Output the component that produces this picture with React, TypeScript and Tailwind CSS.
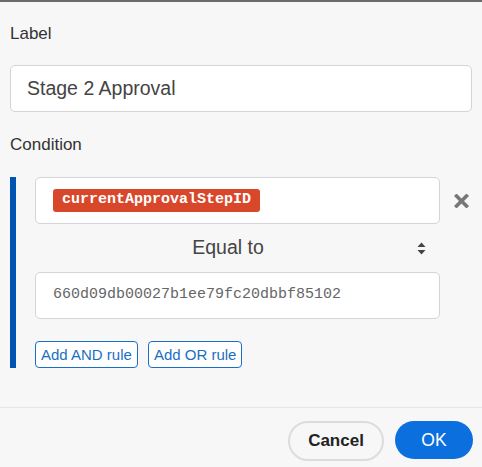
const sans = "font-[family-name:'Liberation_Sans',Arial,sans-serif]";
const mono = "font-[family-name:'Liberation_Mono','Courier_New',monospace]";

function SortArrows() {
  return (
    <svg width="9" height="13" viewBox="0 0 9 13" className="text-[#444]">
      <path d="M4.5 0.5 L8.5 5 L0.5 5 Z" fill="currentColor" />
      <path d="M0.5 8 L8.5 8 L4.5 12.5 Z" fill="currentColor" />
    </svg>
  );
}

function RemoveIcon() {
  return (
    <svg width="15" height="14" viewBox="0 0 15 14" className="text-[#777]">
      <path
        d="M2.5 2 L12.5 12 M12.5 2 L2.5 12"
        stroke="currentColor"
        strokeWidth="3.6"
        strokeLinecap="square"
      />
    </svg>
  );
}

export default function App() {
  return (
    <div className={`h-[467px] w-[482px] overflow-hidden border-t-2 border-[#6b6b6b] bg-[#f7f7f7] ${sans}`}>
      <div className="px-[10px] pt-[22px]">
        <div className="text-[17px] leading-[20px] text-[#333]">Label</div>

        <div className="mt-[21px] flex h-[47px] items-center rounded-[5px] border border-[#d4d4d4] bg-white pl-[16px] text-[19.5px] text-[#444]">
          Stage 2 Approval
        </div>

        <div className="mt-[23px] text-[17px] leading-[20px] text-[#333]">Condition</div>

        <div className="mt-[22px] flex">
          <div className="w-[6px] shrink-0 bg-[#0055b3]" />
          <div className="ml-[19px] flex flex-col">
            <div className="flex items-center">
              <div className="flex h-[47px] w-[405px] items-center rounded-[5px] border border-[#d4d4d4] bg-white pl-[17px]">
                <span
                  className={`flex h-[23px] items-center rounded-[3px] bg-[#d9472b] px-[9px] text-[15px] font-bold text-white ${mono}`}
                >
                  currentApprovalStepID
                </span>
              </div>
              <button className="flex w-[42px] items-center justify-center pl-[1px]">
                <RemoveIcon />
              </button>
            </div>

            <div className="flex h-[48px] w-[405px] items-center pl-[4px] pr-[14px]">
              <span className="flex-1 text-center text-[19.5px] text-[#444]">Equal to</span>
              <SortArrows />
            </div>

            <div
              className={`flex h-[47px] w-[405px] items-center rounded-[5px] border border-[#d4d4d4] bg-white pl-[17px] text-[15px] text-[#666] ${mono}`}
            >
              660d09db00027b1ee79fc20dbbf85102
            </div>

            <div className="mt-[22px] flex gap-[10px]">
              <button className="h-[27px] rounded-[4px] border border-[#1a6fc4] bg-white px-[5px] text-[15px] leading-none text-[#1a6fc4]">
                Add AND rule
              </button>
              <button className="h-[27px] rounded-[4px] border border-[#1a6fc4] bg-white px-[5px] text-[15px] leading-none text-[#1a6fc4]">
                Add OR rule
              </button>
            </div>
          </div>
        </div>
      </div>

      <div className="mt-[39px] border-t border-[#e6e6e6]" />

      <div className="flex justify-end gap-[11px] px-[9px] pt-[13px]">
        <button className="h-[40px] w-[96px] rounded-full border-2 border-[#dcdcdc] bg-[#f7f7f7] text-[17px] font-bold text-[#222]">
          Cancel
        </button>
        <button className="h-[38px] w-[78px] rounded-full bg-[#0b6fde] text-[17.5px] text-white">
          OK
        </button>
      </div>
    </div>
  );
}
